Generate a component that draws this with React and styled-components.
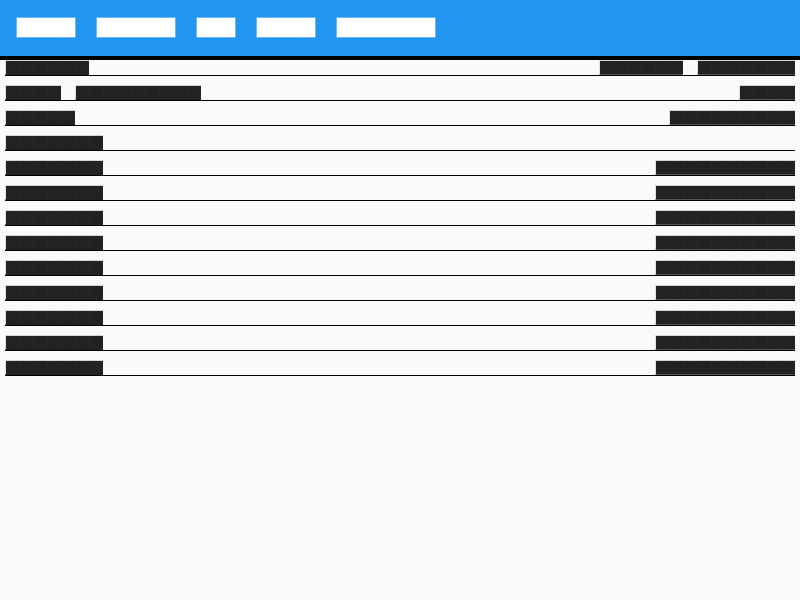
import React from 'react';
import styled, { createGlobalStyle } from 'styled-components';

const GlobalStyle = createGlobalStyle`
  html, body {
    margin: 0;
    padding: 0;
    background: #fafafa;
    font-family: "Liberation Sans", Arial, sans-serif;
  }
`;

const Page = styled.div`
  min-height: 600px;
  background: #fafafa;
`;

const Header = styled.header`
  height: 56px;
  background: #2196f3;
  border-bottom: 4px solid #000;
  display: flex;
  align-items: center;
  gap: 20px;
  padding: 0 16px;
  box-sizing: content-box;
`;

const NavItem = styled.div`
  width: ${(p) => p.$w}px;
  height: 21px;
  box-sizing: border-box;
  background: #fff;
  border: 1px solid #6ab8f7;
  margin-top: -1px;
`;

const List = styled.main`
  padding: 0 5px;
  display: flex;
  flex-direction: column;
`;

const Row = styled.div`
  display: flex;
  align-items: flex-end;
  gap: 14px;
  padding-top: ${(p) => (p.$first ? 0 : 9)}px;
  border-bottom: 1px solid #000;
`;

const Right = styled.div`
  margin-left: auto;
  display: flex;
  gap: 14px;
`;

const Block = styled.span`
  display: block;
  width: ${(p) => p.$w}px;
  height: 15px;
  box-sizing: border-box;
  background: repeating-linear-gradient(90deg, #222 0 13px, #272727 13px 14px);
  border-top: 1px solid #d4d4d4;
  border-left: 1px solid #e2e2e2;
  border-bottom: 1px solid ${(p) => (p.$right ? '#555' : '#222')};
`;

const nav = [60, 80, 40, 60, 100];

const rows = [
  { left: [84], right: [84, 98] },
  { left: [56, 126], right: [56] },
  { left: [70], right: [126] },
  { left: [98], right: [] },
  ...Array.from({ length: 9 }, () => ({ left: [98], right: [140] })),
];

export default function App() {
  return (
    <Page>
      <GlobalStyle />
      <Header>
        {nav.map((w, i) => (
          <NavItem key={i} $w={w} />
        ))}
      </Header>
      <List>
        {rows.map((r, i) => (
          <Row key={i} $first={i === 0}>
            {r.left.map((w, j) => (
              <Block key={j} $w={w} />
            ))}
            {r.right.length > 0 && (
              <Right>
                {r.right.map((w, j) => (
                  <Block key={j} $w={w} $right />
                ))}
              </Right>
            )}
          </Row>
        ))}
      </List>
    </Page>
  );
}
